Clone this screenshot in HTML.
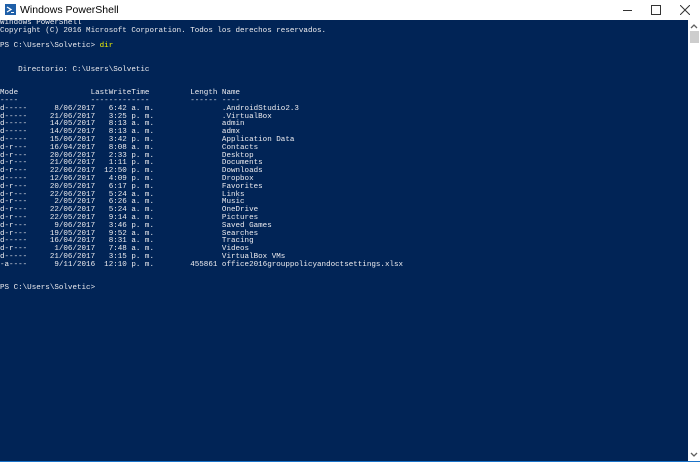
<!DOCTYPE html>
<html><head><meta charset="utf-8"><style>
html,body{margin:0;padding:0;width:700px;height:462px;overflow:hidden;background:#fff}
#title{position:absolute;left:0;top:0;width:700px;height:20px;background:#fff;font:10.5px "Liberation Sans",sans-serif;color:#000}
#title span{position:absolute;left:20px;top:4px}
#icon{position:absolute;left:5px;top:4px;width:11px;height:11px;background:#1f5fa8}
#con{position:absolute;left:0;top:20px;width:688px;height:441px;background:#012456;overflow:hidden}
pre{margin:0;font-family:"Liberation Mono",monospace;font-size:7.55px;line-height:7.8px;color:#eeedf0;white-space:pre}
.y{color:#f2f200}
#sb{position:absolute;left:688px;top:20px;width:12px;height:441px;background:#fff}
#th{position:absolute;left:690px;top:31px;width:9px;height:12px;background:#cdcdcd}
#bb{position:absolute;left:0;top:461px;width:700px;height:1px;background:#1a73c9}
</style></head><body>
<div id="title"><div id="icon"><svg width="11" height="11"><path d="M2 3 L6 5.5 L2 8" stroke="#fff" fill="none" stroke-width="1.3"/><path d="M6 8.5h3" stroke="#fff"/></svg></div><span>Windows PowerShell</span>
<div style="position:absolute;left:623px;top:10px;width:9px;height:1px;background:#333"></div>
<div style="position:absolute;left:651px;top:5px;width:8px;height:8px;border:1px solid #333"></div>
<svg style="position:absolute;left:680px;top:5px" width="10" height="10"><path d="M0 0L10 10M10 0L0 10" stroke="#333"/></svg>
</div>
<div id="con"><pre>Windows PowerShell
Copyright (C) 2016 Microsoft Corporation. Todos los derechos reservados.

PS C:\Users\Solvetic&gt; <span class="y">dir</span>


    Directorio: C:\Users\Solvetic


Mode                LastWriteTime         Length Name
----                -------------         ------ ----
d-----      8/06/2017   6:42 a. m.               .AndroidStudio2.3
d-----     21/06/2017   3:25 p. m.               .VirtualBox
d-----     14/05/2017   8:13 a. m.               admin
d-----     14/05/2017   8:13 a. m.               admx
d-----     15/06/2017   3:42 p. m.               Application Data
d-r---     16/04/2017   8:08 a. m.               Contacts
d-r---     20/06/2017   2:33 p. m.               Desktop
d-r---     21/06/2017   1:11 p. m.               Documents
d-r---     22/06/2017  12:50 p. m.               Downloads
d-----     12/06/2017   4:09 p. m.               Dropbox
d-r---     20/05/2017   6:17 p. m.               Favorites
d-r---     22/06/2017   5:24 a. m.               Links
d-r---      2/05/2017   6:26 a. m.               Music
d-r---     22/06/2017   5:24 a. m.               OneDrive
d-r---     22/05/2017   9:14 a. m.               Pictures
d-r---      9/06/2017   3:46 p. m.               Saved Games
d-r---     19/05/2017   9:52 a. m.               Searches
d-----     16/04/2017   8:31 a. m.               Tracing
d-r---      1/06/2017   7:48 a. m.               Videos
d-----     21/06/2017   3:15 p. m.               VirtualBox VMs
-a----      9/11/2016  12:10 p. m.        455861 office2016grouppolicyandoctsettings.xlsx


PS C:\Users\Solvetic&gt;</pre></div>
<div id="sb"></div><div id="th"></div>
<svg style="position:absolute;left:690px;top:23px" width="8" height="6"><path d="M1 5L4 2L7 5" stroke="#606060" fill="none" stroke-width="1.3"/></svg>
<svg style="position:absolute;left:690px;top:452px" width="8" height="6"><path d="M1 1L4 4L7 1" stroke="#606060" fill="none" stroke-width="1.3"/></svg>
<div id="bb"></div>
</body></html>
